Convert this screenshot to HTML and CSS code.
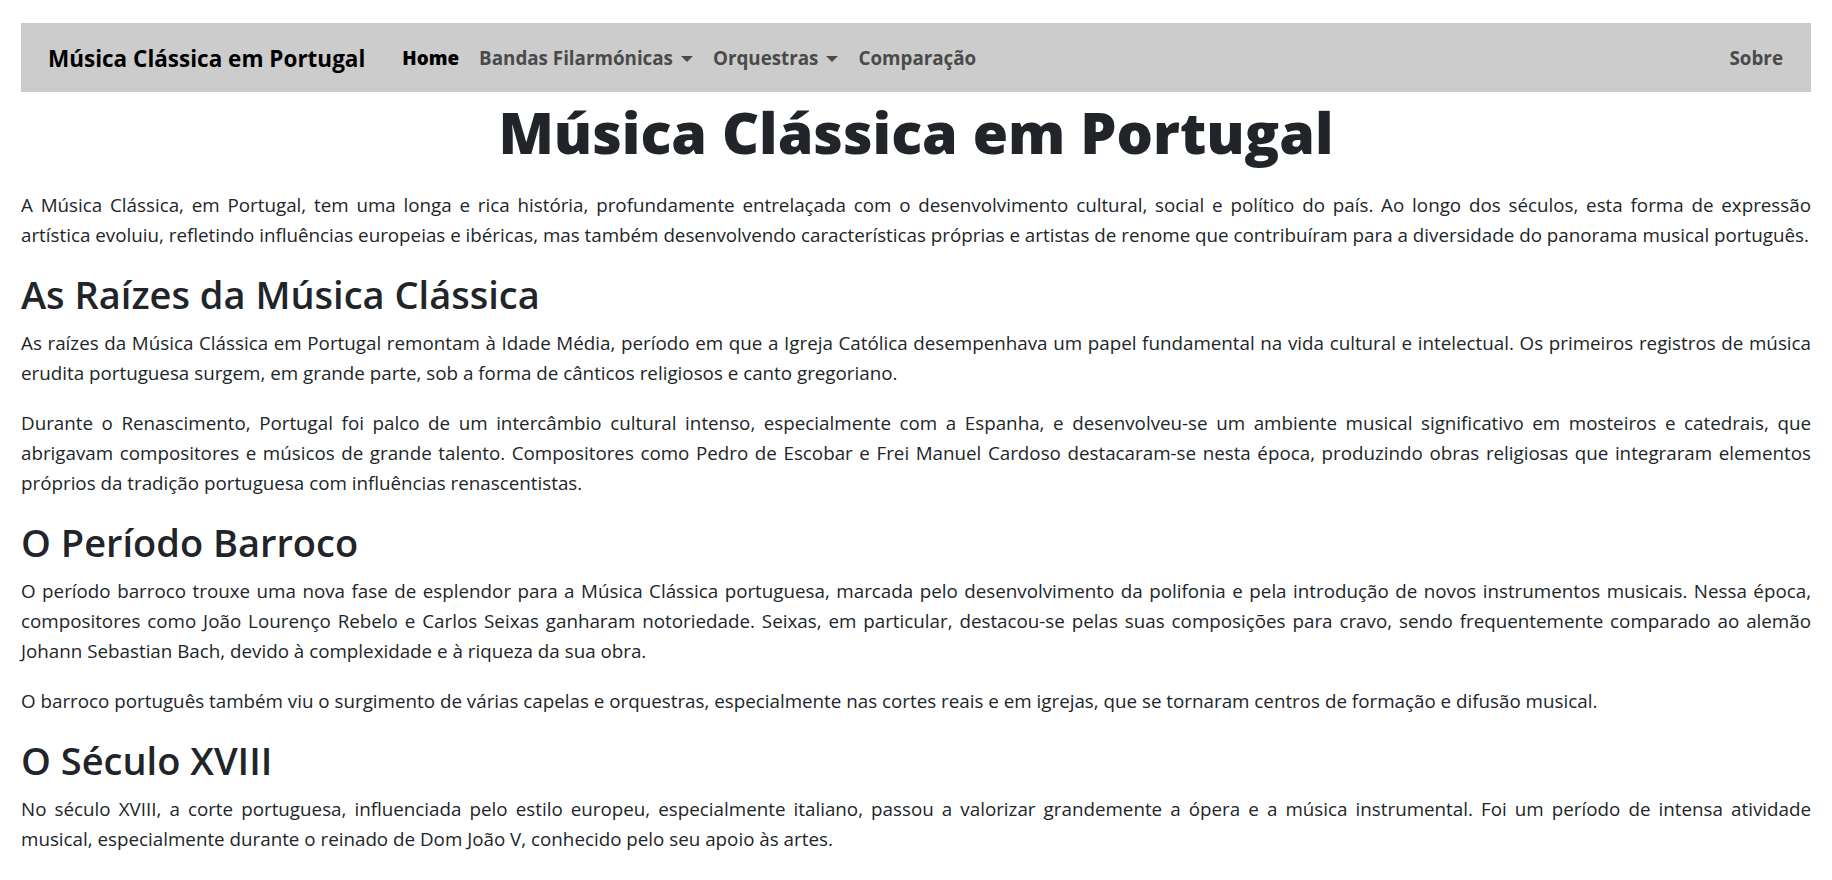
FILE: index.html
```html
<!DOCTYPE html>
<html lang="pt">
<head>
<meta charset="utf-8">
<title>Música Clássica em Portugal</title>
<link rel="stylesheet" href="styles.css">
</head>
<body>
<nav class="navbar">
  <a class="brand" href="#">Música Clássica em Portugal</a>
  <ul class="nav">
    <li><a class="nav-link active" href="#">Home</a></li>
    <li><a class="nav-link dropdown" href="#">Bandas Filarmónicas</a></li>
    <li><a class="nav-link dropdown" href="#">Orquestras</a></li>
    <li><a class="nav-link" href="#">Comparação</a></li>
  </ul>
  <ul class="nav nav-end">
    <li><a class="nav-link" href="#">Sobre</a></li>
  </ul>
</nav>
<main class="content">
  <h1 class="title">Música Clássica em Portugal</h1>
  <p><span class="ln">A Música Clássica, em Portugal, tem uma longa e rica história, profundamente entrelaçada com o desenvolvimento cultural, social e político do país. Ao longo dos séculos, esta forma de expressão</span> <span class="ln-last">artística evoluiu, refletindo influências europeias e ibéricas, mas também desenvolvendo características próprias e artistas de renome que contribuíram para a diversidade do panorama musical português.</span></p>
  <h2>As Raízes da Música Clássica</h2>
  <p><span class="ln">As raízes da Música Clássica em Portugal remontam à Idade Média, período em que a Igreja Católica desempenhava um papel fundamental na vida cultural e intelectual. Os primeiros registros de música</span> <span class="ln-last">erudita portuguesa surgem, em grande parte, sob a forma de cânticos religiosos e canto gregoriano.</span></p>
  <p><span class="ln">Durante o Renascimento, Portugal foi palco de um intercâmbio cultural intenso, especialmente com a Espanha, e desenvolveu-se um ambiente musical significativo em mosteiros e catedrais, que</span> <span class="ln">abrigavam compositores e músicos de grande talento. Compositores como Pedro de Escobar e Frei Manuel Cardoso destacaram-se nesta época, produzindo obras religiosas que integraram elementos</span> <span class="ln-last">próprios da tradição portuguesa com influências renascentistas.</span></p>
  <h2>O Período Barroco</h2>
  <p><span class="ln">O período barroco trouxe uma nova fase de esplendor para a Música Clássica portuguesa, marcada pelo desenvolvimento da polifonia e pela introdução de novos instrumentos musicais. Nessa época,</span> <span class="ln">compositores como João Lourenço Rebelo e Carlos Seixas ganharam notoriedade. Seixas, em particular, destacou-se pelas suas composições para cravo, sendo frequentemente comparado ao alemão</span> <span class="ln-last">Johann Sebastian Bach, devido à complexidade e à riqueza da sua obra.</span></p>
  <p>O barroco português também viu o surgimento de várias capelas e orquestras, especialmente nas cortes reais e em igrejas, que se tornaram centros de formação e difusão musical.</p>
  <h2>O Século XVIII</h2>
  <p><span class="ln">No século XVIII, a corte portuguesa, influenciada pelo estilo europeu, especialmente italiano, passou a valorizar grandemente a ópera e a música instrumental. Foi um período de intensa atividade</span> <span class="ln-last">musical, especialmente durante o reinado de Dom João V, conhecido pelo seu apoio às artes.</span></p>
  <p>Entre os compositores mais destacados deste período encontram-se Francisco António de Almeida, António Teixeira e José Joaquim dos Santos.</p>
</main>
</body>
</html>
```

FILE: styles.css
```css
html, body {
  margin: 0;
  padding: 0;
}
body {
  padding: 23px 21px 0;
  font-family: "Open Sans", "Noto Sans", sans-serif;
  font-size: 18.8px;
  line-height: 30px;
  color: #212529;
  background: #fff;
}
a {
  text-decoration: none;
}
.navbar {
  display: flex;
  align-items: center;
  height: 69px;
  background: #cccccc;
  padding: 1px 18px 0 27px;
  box-sizing: border-box;
}
.brand {
  font-size: 22.5px;
  font-weight: 700;
  color: #000;
  margin-right: 27px;
  line-height: 37px;
}
.nav {
  display: flex;
  list-style: none;
  margin: 0;
  padding: 0;
}
.nav-end {
  margin-left: auto;
}
.nav-link {
  display: block;
  padding: 0 10px;
  font-size: 18.8px;
  font-weight: 700;
  color: #4a4a4a;
  line-height: 30px;
}
.nav-link.active {
  color: #000;
  font-weight: 800;
}
.dropdown::after {
  content: "";
  display: inline-block;
  margin-left: 8px;
  vertical-align: 3px;
  border-top: 6px solid;
  border-left: 6.5px solid transparent;
  border-right: 6.5px solid transparent;
}
.content {
  display: block;
}
.title {
  text-align: center;
  font-size: 57.3px;
  font-weight: 800;
  line-height: 72px;
  margin: 4px 0 22px;
}
h2 {
  font-size: 38px;
  font-weight: 600;
  line-height: 48px;
  margin: 0 0 10px;
}
p {
  margin: 0 0 20px;
  text-align: justify;
}
.ln {
  display: block;
  white-space: nowrap;
  text-align: justify;
  text-align-last: justify;
}
.ln-last {
  display: block;
  white-space: nowrap;
}
```
